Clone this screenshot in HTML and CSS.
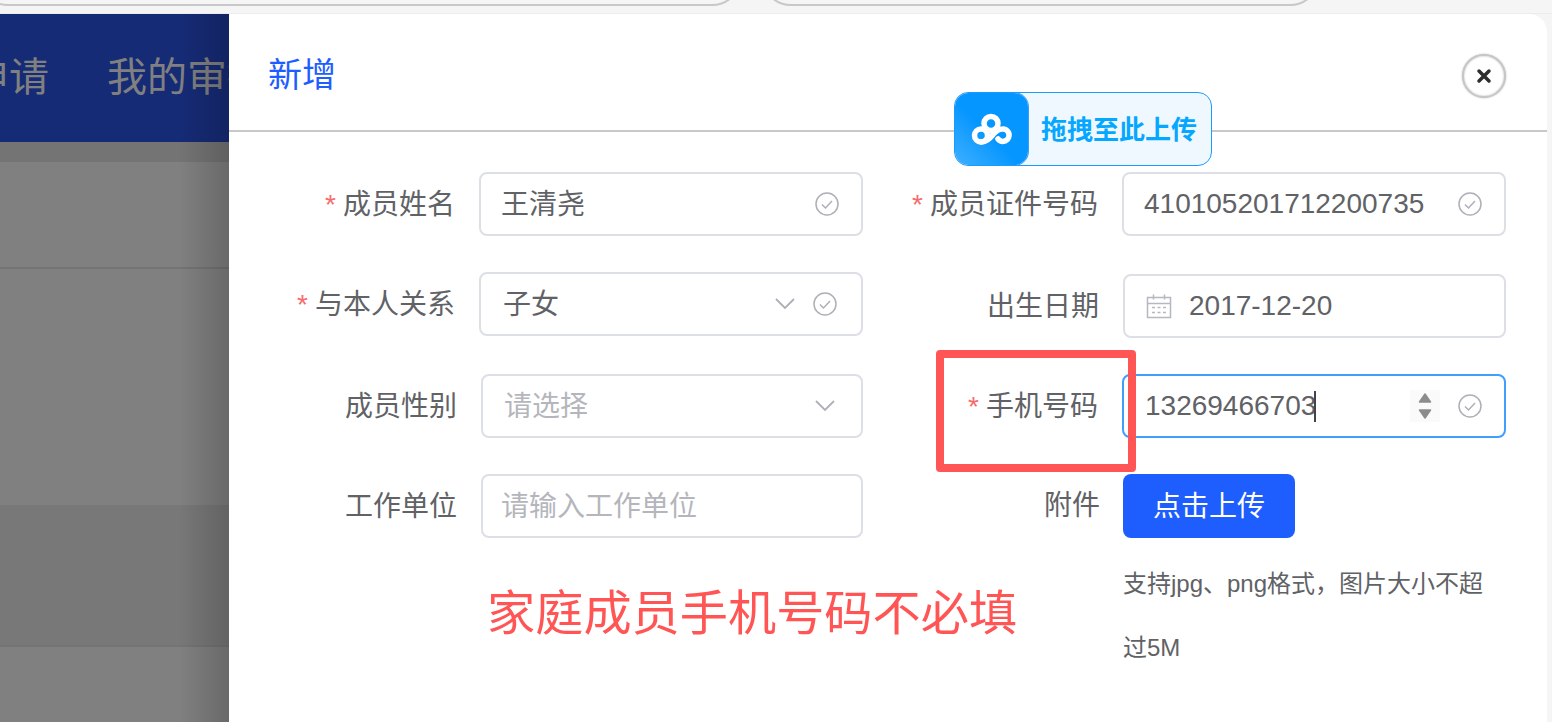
FILE: index.html
```html
<!DOCTYPE html>
<html lang="zh-CN">
<head>
  <meta charset="UTF-8">
  <title>新增家庭成员</title>
  <link rel="stylesheet" href="styles.css">
</head>
<body>
  <div class="top-strip">
    <div class="pill pill-first"></div>
    <div class="pill pill-second"></div>
  </div>

  <div class="stage">
    <div class="backdrop">
      <div class="backdrop-nav">
        <span>我的申请</span>
        <span>我的审批</span>
      </div>
      <div class="backdrop-band"></div>
      <div class="backdrop-row"></div>
      <div class="backdrop-row backdrop-row-plain"></div>
      <div class="backdrop-row backdrop-row-dark"></div>
      <div class="backdrop-row backdrop-row-last"></div>
    </div>

    <div class="dialog">
      <header class="dialog-header">
        <h2>新增</h2>
        <button class="close-btn" type="button">
          <svg width="16" height="16" viewBox="0 0 16 16"><path d="M3 3l10 10M13 3L3 13" stroke="#2d2d2d" stroke-width="3.500" stroke-linecap="round"/></svg>
        </button>
      </header>

      <div class="form">
        <div class="form-col">
          <div class="field field-gap">
            <label class="required">成员姓名</label>
            <div class="control">
              <span class="value value-cjk">王清尧</span>
              <svg class="check" viewBox="0 0 24 24"><circle cx="12" cy="12" r="11" /><path d="M7 12.500l3.500 3.500L17 9" /></svg>
            </div>
          </div>
          <div class="field field-gap-wide">
            <label class="required">与本人关系</label>
            <div class="control control-select">
              <span class="value value-cjk">子女</span>
              <svg class="arrow" viewBox="0 0 20 12"><path d="M1 1l9 9 9-9" /></svg>
              <svg class="check" viewBox="0 0 24 24"><circle cx="12" cy="12" r="11" /><path d="M7 12.500l3.500 3.500L17 9" /></svg>
            </div>
          </div>
          <div class="field field-gap">
            <label>成员性别</label>
            <div class="control control-narrow control-gender">
              <span class="value value-cjk placeholder">请选择</span>
              <svg class="arrow arrow-end" viewBox="0 0 20 12"><path d="M1 1l9 9 9-9" /></svg>
            </div>
          </div>
          <div class="field">
            <label>工作单位</label>
            <div class="control control-narrow control-work">
              <span class="value value-cjk placeholder">请输入工作单位</span>
            </div>
          </div>
        </div>

        <div class="form-col">
          <div class="field field-gap-wide">
            <label class="required">成员证件号码</label>
            <div class="control">
              <span class="value">410105201712200735</span>
              <svg class="check" viewBox="0 0 24 24"><circle cx="12" cy="12" r="11" /><path d="M7 12.500l3.500 3.500L17 9" /></svg>
            </div>
          </div>
          <div class="field field-gap">
            <label>出生日期</label>
            <div class="control control-date">
              <svg class="calendar" viewBox="0 0 26 26">
                <path d="M1.500 4.500h23v20h-23zM1.500 10.500h23M7.500 1.500v5M18.500 1.500v5" />
                <path d="M6 14.500h3M11.500 14.500h3M17 14.500h3M6 19.500h3M11.500 19.500h3M17 19.500h3" />
              </svg>
              <span class="value">2017-12-20</span>
            </div>
          </div>
          <div class="field field-gap">
            <label class="required">手机号码</label>
            <div class="control control-focus">
              <span class="value">13269466703</span><span class="caret"></span>
              <span class="stepper">
                <svg viewBox="0 0 14 28"><path d="M7 2l5.500 8H1.500zM7 26L1.500 18h11z" /></svg>
              </span>
              <svg class="check" viewBox="0 0 24 24"><circle cx="12" cy="12" r="11" /><path d="M7 12.500l3.500 3.500L17 9" /></svg>
            </div>
          </div>
          <div class="field field-upload">
            <label>附件</label>
            <div class="upload">
              <button class="upload-btn" type="button">点击上传</button>
              <p class="upload-tip">支持jpg、png格式，图片大小不超过5M</p>
            </div>
          </div>
        </div>
      </div>
    </div>
  </div>

  <!-- floating drag target from the netdisk extension -->
  <div class="drag-badge">
    <span class="drag-badge-icon">
      <svg width="44" height="34" viewBox="0 0 44 34">
        <circle cx="21" cy="11.500" r="7" />
        <circle cx="11" cy="23.500" r="6.500" />
        <path d="M11 30C17 30 20 26 23.500 22C26 19 28 17 32.500 17A6.200 6.200 0 1 1 28 27" />
      </svg>
    </span>
    <span class="drag-badge-text">拖拽至此上传</span>
  </div>

  <!-- annotations drawn on top of the screenshot -->
  <div class="mark-box"></div>
  <div class="mark-text">家庭成员手机号码不必填</div>
</body>
</html>
```

FILE: styles.css
```css
* {
  box-sizing: border-box;
}

html,
body {
  height: 100%;
}

body {
  margin: 0;
  overflow: hidden;
  position: relative;
  background-color: #f5f5f5;
  color: #606266;
  font-family: "Liberation Sans", "Noto Sans CJK SC", sans-serif;
}

.top-strip {
  height: 14px;
  padding-bottom: 7px;
  display: flex;
  align-items: flex-end;
  overflow: hidden;
  border-bottom: 1px solid #ececec;
}

.pill {
  flex: none;
  height: 60px;
  border: 2px solid #c8c8c8;
  border-radius: 30px;
}

.pill-first {
  width: 764px;
  margin-left: -22px;
}

.pill-second {
  width: 559px;
  margin-left: 19px;
}

.stage {
  display: flex;
  height: 708px;
}

/* dimmed page behind the dialog */
.backdrop {
  flex: none;
  width: 229px;
  position: relative;
  overflow: hidden;
  background-color: #808080;
}

.backdrop::after {
  content: "";
  position: absolute;
  top: 0;
  right: 0;
  bottom: 0;
  width: 50px;
  background: linear-gradient(to right, rgba(0,0,0,0), rgba(0,0,0,0.18));
}

.backdrop-nav {
  height: 128px;
  margin-left: -111px;
  padding-bottom: 8px;
  display: flex;
  align-items: center;
  gap: 58px;
  background-color: #162b76;
  color: #808080;
  font-size: 40px;
  white-space: nowrap;
}

.backdrop-band {
  height: 20px;
  background-color: #747474;
}

.backdrop-row {
  height: 107px;
  border-bottom: 2px solid #747474;
}

.backdrop-row-plain {
  height: 236px;
  border-bottom: 0;
}

.backdrop-row-dark {
  height: 142px;
  background-color: #787878;
}

.backdrop-row-last {
  border-bottom: 0;
}

.dialog {
  flex: none;
  width: 1318px;
  background-color: #fff;
  border-top-right-radius: 18px;
}

.dialog-header {
  height: 118px;
  padding: 8px 41px 0 39px;
  display: flex;
  align-items: center;
  justify-content: space-between;
  border-bottom: 2px solid #c8c8c8;
}

.dialog-header h2 {
  margin: 0 0 8px;
  color: #1e5eff;
  font-size: 34px;
  font-weight: normal;
}

.close-btn {
  width: 44px;
  height: 44px;
  padding: 0;
  display: flex;
  align-items: center;
  justify-content: center;
  border: 2px solid #c6c6c6;
  border-radius: 50%;
  background-color: #fff;
  box-shadow: 0 0 2px #bbb, inset 0 0 2px #bbb;
}

.form {
  padding-top: 40px;
  display: grid;
  grid-template-columns: 634px 643px;
}

.form-col {
  display: flex;
  flex-direction: column;
}

.field {
  display: flex;
  align-items: center;
  justify-content: flex-end;
  gap: 24px;
  font-size: 28px;
}

.field label {
  padding-bottom: 4px;
}

.field-gap {
  margin-bottom: 36px;
}

.field-gap-wide {
  margin-bottom: 38px;
}

.field-upload {
  align-items: flex-start;
}

.field-upload label {
  padding: 0;
  margin-right: -1px;
  line-height: 64px;
}

.required::before {
  content: "*";
  margin-right: 7px;
  color: #f56c6c;
}

.control {
  flex: none;
  width: 384px;
  height: 64px;
  padding: 0 22px 0 20px;
  display: flex;
  align-items: center;
  border: 2px solid #dcdfe6;
  border-radius: 8px;
  background-color: #fff;
}

.control-select {
  padding: 0 24px 0 22px;
}

.control-narrow {
  width: 382px;
}

.control-gender {
  padding-left: 21px;
}

.control-work {
  padding-left: 18px;
}

.control-date {
  width: 383px;
  padding-left: 21px;
}

.control-focus {
  padding-left: 21px;
  border-color: #409eff;
}

.value {
  white-space: nowrap;
}

.value-cjk {
  padding-bottom: 4px;
}

.placeholder {
  color: #b4b6bc;
}

.check {
  flex: none;
  width: 24px;
  height: 24px;
  margin-left: auto;
  fill: none;
  stroke: #adb0b8;
  stroke-width: 1.500;
}

.arrow {
  flex: none;
  width: 20px;
  height: 12px;
  margin-left: auto;
  margin-right: 18px;
  fill: none;
  stroke: #adb0b8;
  stroke-width: 1.800;
}

.arrow + .check {
  margin-left: 0;
}

.arrow-end {
  margin-right: 4px;
}

.calendar {
  flex: none;
  width: 26px;
  height: 26px;
  margin-right: 17px;
  fill: none;
  stroke: #b5b8bf;
  stroke-width: 1.500;
}

.caret {
  flex: none;
  width: 2px;
  height: 31px;
  margin-left: -2px;
  background-color: #444;
}

.stepper {
  flex: none;
  width: 30px;
  height: 32px;
  margin-left: auto;
  margin-right: 18px;
  display: flex;
  align-items: center;
  justify-content: center;
  background-color: #fafafa;
}

.stepper svg {
  width: 14px;
  height: 28px;
  fill: #8c8c8c;
  stroke: #8c8c8c;
  stroke-width: 1.500;
  stroke-linejoin: round;
}

.stepper + .check {
  margin-left: 0;
}

.upload {
  flex: none;
  width: 383px;
}

.upload-btn {
  width: 172px;
  height: 64px;
  padding: 0 0 4px;
  border: none;
  border-radius: 8px;
  background-color: #1e5eff;
  color: #fff;
  font-family: inherit;
  font-size: 28px;
}

.upload-tip {
  margin: 14px 0 0;
  font-size: 24px;
  line-height: 64px;
}

.drag-badge {
  position: absolute;
  left: 954px;
  top: 92px;
  width: 258px;
  height: 74px;
  display: flex;
  align-items: center;
  overflow: hidden;
  border: 1px solid #1a9cff;
  border-radius: 14px;
  background-color: #f0f8ff;
}

.drag-badge-icon {
  flex: none;
  width: 73px;
  height: 100%;
  display: flex;
  align-items: center;
  justify-content: center;
  border-radius: 14px;
  background: linear-gradient(to top right, #3fb0ff, #0696ff 45%);
  box-shadow: 0 0 0 1px #3f9cf0;
}

.drag-badge-icon svg {
  fill: none;
  stroke: #fff;
  stroke-width: 5.500;
  stroke-linecap: round;
}

.drag-badge-text {
  margin-left: 13px;
  padding-bottom: 4px;
  color: #06a7ff;
  font-size: 26px;
  font-weight: bold;
  white-space: nowrap;
}

.mark-box {
  position: absolute;
  left: 936px;
  top: 350px;
  width: 200px;
  height: 122px;
  border: 8px solid #ff5555;
  border-radius: 4px;
}

.mark-text {
  position: absolute;
  left: 487px;
  top: 578px;
  color: #ff5555;
  font-size: 48.200px;
  line-height: 70px;
  white-space: nowrap;
}
```
